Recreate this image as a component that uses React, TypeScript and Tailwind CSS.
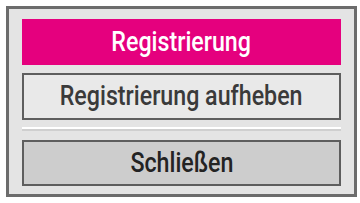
const label = "inline-block scale-x-[0.86] text-[27px] font-medium leading-none whitespace-nowrap"

export default function App() {
  return (
    <div className="w-[360px] h-[203px] bg-white pt-[6px] pl-[6px]" style={{ fontFamily: "Roboto, 'Liberation Sans', sans-serif" }}>
      <div className="w-[351px] h-[191px] border-[3px] border-[#6c6c6c] bg-[#e4e4e4] pt-[10px] px-[13px] flex flex-col">
        <div className="h-[46px] bg-[#e5007e] flex items-center justify-center text-white">
          <span className={label}>Registrierung</span>
        </div>
        <div className="mt-[8px] h-[47px] border-2 border-[#5e5e5e] bg-[#e9e9e9] flex items-center justify-center text-[#3a3a3a]">
          <span className={label}>Registrierung aufheben</span>
        </div>
        <div className="mt-[7px] border-t-2 border-white" />
        <div className="border-t-2 border-[#cfcfcf]" />
        <div className="mt-[9px] h-[46px] border-2 border-[#5e5e5e] bg-[#cdcdcd] flex items-center justify-center text-[#232323]">
          <span className={label}>Schließen</span>
        </div>
      </div>
    </div>
  )
}
